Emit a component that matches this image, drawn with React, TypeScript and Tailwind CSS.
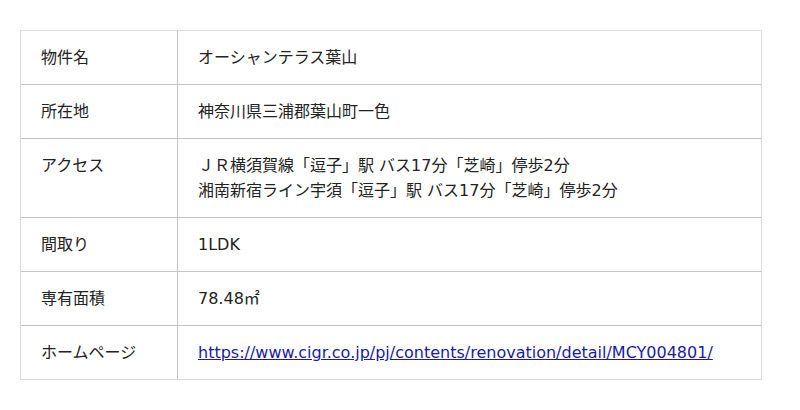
const rows: { label: string; value: React.ReactNode }[] = [
  { label: '物件名', value: 'オーシャンテラス葉山' },
  { label: '所在地', value: '神奈川県三浦郡葉山町一色' },
  {
    label: 'アクセス',
    value: (
      <>
        ＪＲ横須賀線「逗子」駅 バス17分「芝崎」停歩2分
        <br />
        湘南新宿ライン宇須「逗子」駅 バス17分「芝崎」停歩2分
      </>
    ),
  },
  { label: '間取り', value: '1LDK' },
  { label: '専有面積', value: '78.48㎡' },
  {
    label: 'ホームページ',
    value: (
      <a
        href="#"
        className="text-[#1a1aa6] underline"
      >
        https://www.cigr.co.jp/pj/contents/renovation/detail/MCY004801/
      </a>
    ),
  },
];

export default function App() {
  return (
    <div
      className="w-[800px] h-[410px] bg-white pt-[30px] pl-[20px] text-[16px] leading-[25px] text-[#222]"
      style={{ fontFamily: '"DejaVu Sans", "Noto Sans CJK JP", sans-serif' }}
    >
      <div className="w-[742px] border border-[#dcdcdc]">
        {rows.map((row, i) => (
          <div
            key={row.label}
            className={`flex ${i > 0 ? 'border-t border-[#c4c4c4]' : ''}`}
          >
            <div className="w-[157px] shrink-0 border-r border-[#c4c4c4] px-5 py-[14px]">
              {row.label}
            </div>
            <div className="flex-1 px-5 py-[14px]">{row.value}</div>
          </div>
        ))}
      </div>
    </div>
  );
}
